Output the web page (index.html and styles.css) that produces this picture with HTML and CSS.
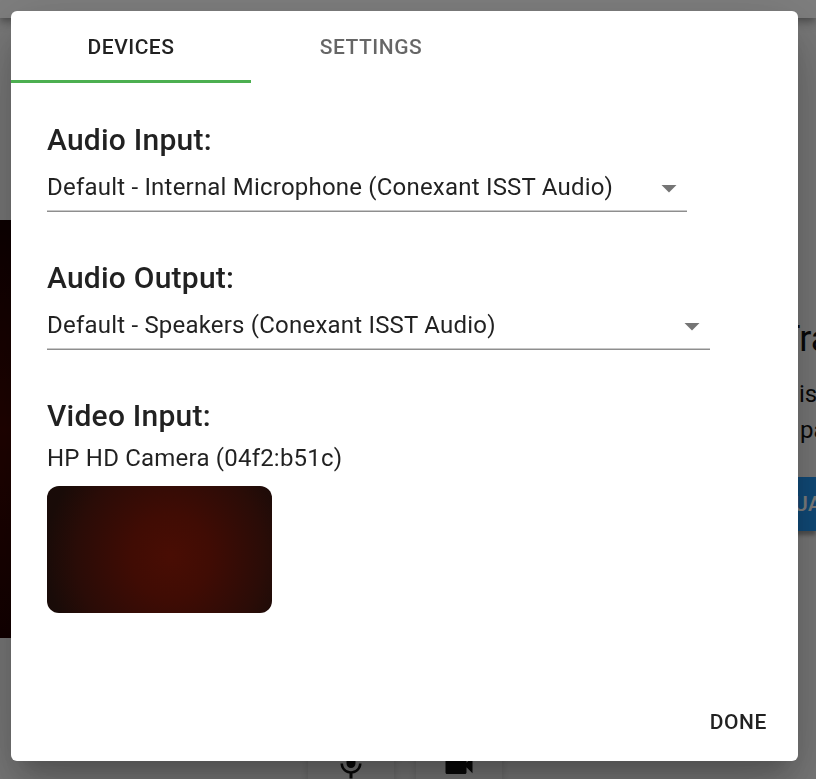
FILE: index.html
```html
<!DOCTYPE html>
<html lang="en">
<head>
<meta charset="utf-8">
<title>Device settings</title>
<link rel="stylesheet" href="styles.css">
</head>
<body>
<div class="page">
  <header class="topbar"></header>
  <main class="room">
    <div class="preview"></div>
    <section class="info">
      <h1>Tra</h1>
      <p class="line">is</p>
      <p class="line second">pa</p>
      <div class="join">UA</div>
    </section>
  </main>
  <footer class="controls">
    <div class="control"><svg class="mic" viewBox="0 0 24 24"><path d="M12 14c1.66 0 2.99-1.34 2.99-3L15 5c0-1.66-1.34-3-3-3S9 3.340 9 5v6c0 1.660 1.340 3 3 3zm5.300-3c0 3-2.540 5.100-5.300 5.100S6.700 14 6.700 11H5c0 3.410 2.720 6.230 6 6.720V21h2v-3.280c3.280-.48 6-3.300 6-6.720h-1.700z"/></svg></div>
    <div class="control"><svg class="cam" viewBox="0 0 24 24"><path d="M17 10.500V7c0-.55-.45-1-1-1H4c-.55 0-1 .45-1 1v10c0 .55.45 1 1 1h12c.55 0 1-.45 1-1v-3.500l4 4v-11l-4 4z"/></svg></div>
  </footer>
</div>
<div class="backdrop">
  <div class="dialog" role="dialog">
    <div class="tabs">
      <div class="tab active">DEVICES</div>
      <div class="tab">SETTINGS</div>
    </div>
    <div class="content">
      <section class="group">
        <h2>Audio Input:</h2>
        <div class="select input"><span>Default - Internal Microphone (Conexant ISST Audio)</span><svg viewBox="0 0 24 24"><path d="M7 10l5 5 5-5z"/></svg></div>
      </section>
      <section class="group">
        <h2>Audio Output:</h2>
        <div class="select output"><span>Default - Speakers (Conexant ISST Audio)</span><svg viewBox="0 0 24 24"><path d="M7 10l5 5 5-5z"/></svg></div>
      </section>
      <section class="group">
        <h2>Video Input:</h2>
        <p class="camera">HP HD Camera (04f2:b51c)</p>
        <div class="video"></div>
      </section>
    </div>
    <div class="actions"><div class="done">DONE</div></div>
  </div>
</div>
</body>
</html>
```
FILE: styles.css
```css
* { box-sizing: border-box; }
body { margin: 0; font-family: Roboto, sans-serif; overflow: hidden; }
h1, h2, p { margin: 0; }

.page { height: 779px; display: flex; flex-direction: column; background: #f2f2f2; overflow: hidden; }
.topbar { height: 18px; flex: none; background: #fff; box-shadow: 0 3px 6px -1px rgba(0,0,0,.2), 0 6px 8px rgba(0,0,0,.14), 0 2px 15px rgba(0,0,0,.12); }
.room { height: 708px; flex: none; display: flex; justify-content: space-between; padding-top: 202px; }
.preview { width: 60px; height: 418px; background: linear-gradient(#190100, #400600 50%, #250200); }
.info { width: 37px; padding-top: 94px; white-space: nowrap; color: #111; }
.info h1 { font-size: 36px; line-height: 50px; font-weight: 400; }
.line { font-size: 24px; line-height: 36px; margin-top: 12px; padding-left: 20px; }
.line.second { margin-top: 0; padding-left: 21px; }
.join { height: 54px; margin: 29px 0 0 -40px; padding-left: 55px; line-height: 54px; font-size: 21px; font-weight: 500; letter-spacing: .6px; color: #fff; background: #2196f3; box-shadow: 0 4px 4px rgba(0,0,0,.35); overflow: hidden; }
.controls { display: flex; gap: 22px; padding-left: 308px; }
.control { width: 86px; height: 90px; flex: none; display: flex; justify-content: center; border-radius: 0 0 12px 12px; background: #efefef; box-shadow: 0 2px 8px rgba(0,0,0,.16); }
.control svg { width: 36px; height: 36px; margin-top: 21px; fill: #111; }

.backdrop { position: fixed; inset: 0; padding: 11px; background: rgba(0,0,0,.5); }
.dialog { width: 787px; height: 750px; display: flex; flex-direction: column; background: #fff; border-radius: 6px; color: rgba(0,0,0,.87); box-shadow: 0 16.5px 22.5px -10.5px rgba(0,0,0,.2), 0 36px 57px 4.5px rgba(0,0,0,.14), 0 13.500px 69px 12px rgba(0,0,0,.12); }
.tabs { height: 72px; flex: none; display: flex; }
.tab { width: 240px; border-bottom: 3px solid transparent; text-align: center; font-size: 21px; line-height: 72px; font-weight: 500; letter-spacing: .5px; color: rgba(0,0,0,.6); }
.tab.active { border-color: #4caf50; color: rgba(0,0,0,.87); }
.content { flex: 1; padding: 33px 36px 0; }
.group { height: 138px; }
h2 { font-size: 30px; line-height: 48px; font-weight: 500; letter-spacing: .225px; }
.select { height: 48px; display: flex; align-items: center; justify-content: space-between; border-bottom: 1px solid #8e8e8e; box-shadow: inset 0 -1px #c8c8c8; font-size: 24px; letter-spacing: .205px; }
.select span { padding-bottom: 2px; }
.select.input { width: 640px; }
.select.output { width: 663px; }
.select svg { width: 36px; height: 36px; fill: #757575; }
.camera { font-size: 24px; line-height: 36px; letter-spacing: .205px; }
.video { width: 225px; height: 127px; margin-top: 10px; border-radius: 12px; background: radial-gradient(ellipse 125px 130px at 55% 55%, #490d04 0%, #400c04 32%, #2a0c07 75%, #190b08 100%); }
.actions { height: 78px; flex: none; display: flex; justify-content: flex-end; align-items: center; padding-right: 31px; }
.done { font-size: 21px; font-weight: 500; letter-spacing: .6px; }
```
